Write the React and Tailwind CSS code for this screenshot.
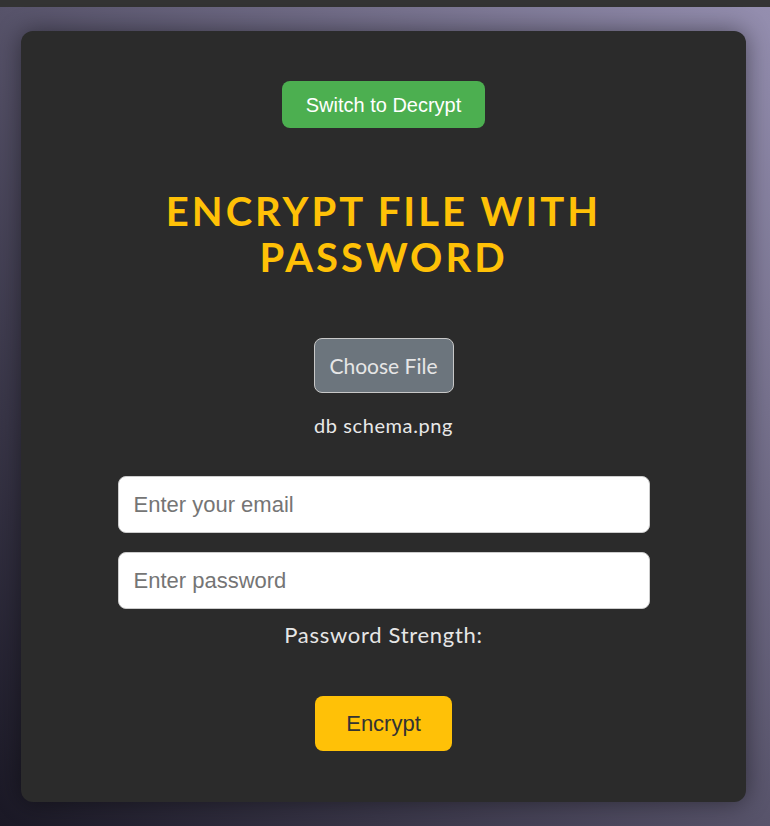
import React from 'react'

export default function App() {
  return (
    <div className="min-h-[826px] flex flex-col bg-[linear-gradient(to_top_right,#1a1825,#958fb0)]">
      <div className="h-[7px] bg-[#333333]" />

      <div className="pl-[21px] pr-[24px] pt-[24px] pb-[24px] flex-1">
        <div className="bg-[#2b2b2b] rounded-[12px] shadow-[0_0_24px_rgba(0,0,0,0.45)] pt-[50px] pb-[51px] flex flex-col items-center">
          <button className="bg-[#4caf50] text-white rounded-[8px] h-[47px] px-[24px] text-[20px] font-['Liberation_Sans',Arial,sans-serif]">
            Switch to Decrypt
          </button>

          <h1 className="mt-[60px] text-center text-[#ffc107] font-['Lato',sans-serif] font-bold uppercase text-[40px] leading-[46px] tracking-[3px] max-w-[480px]">
            Encrypt File with Password
          </h1>

          <button className="mt-[58px] bg-[#6c757d] border border-[#c8c8c8] rounded-[8px] w-[140px] h-[55px] text-[21px] text-[#e6e6e6] font-['Lato',sans-serif]">
            Choose File
          </button>
          <p className="mt-[20px] text-[20px] leading-[24px] tracking-[0.6px] text-[#e8e8e8] font-['Lato',sans-serif]">
            db schema.png
          </p>

          <div className="mt-[39px] w-[532px] flex flex-col gap-[19px]">
            <input
              type="email"
              placeholder="Enter your email"
              className="h-[57px] w-full bg-white rounded-[8px] border border-[#cccccc] px-[15px] text-[22px] text-[#333] placeholder:text-[#757575] font-['Liberation_Sans',Arial,sans-serif] outline-none"
            />
            <input
              type="password"
              placeholder="Enter password"
              className="h-[57px] w-full bg-white rounded-[8px] border border-[#cccccc] px-[15px] text-[22px] text-[#333] placeholder:text-[#757575] font-['Liberation_Sans',Arial,sans-serif] outline-none"
            />
          </div>

          <p className="mt-[13px] text-[22px] leading-[26px] tracking-[0.7px] text-[#e6e6e6] font-['Lato',sans-serif]">
            Password Strength:
          </p>

          <button className="mt-[48px] bg-[#ffc107] text-[#333333] rounded-[8px] w-[137px] h-[55px] text-[22px] font-['Liberation_Sans',Arial,sans-serif]">
            Encrypt
          </button>
        </div>
      </div>
    </div>
  )
}
